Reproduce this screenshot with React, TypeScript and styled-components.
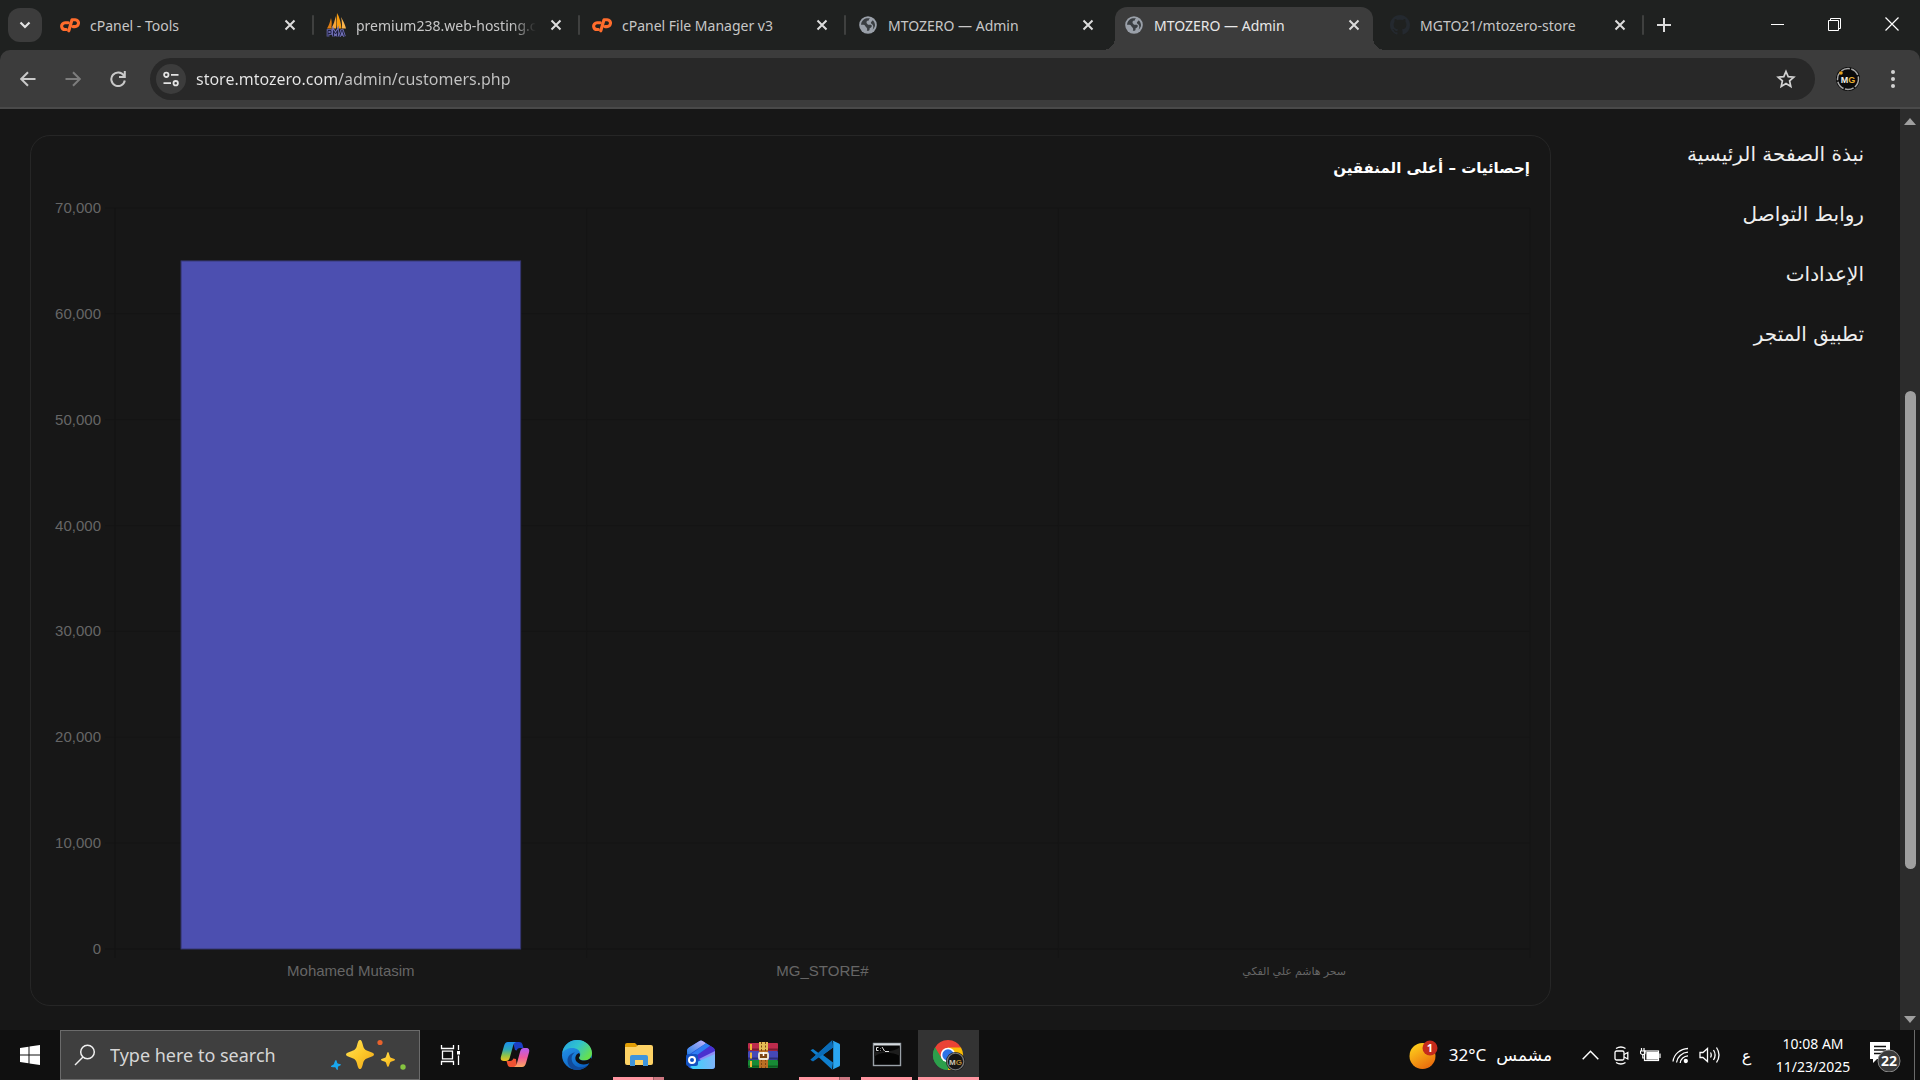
import React from "react";
import styled, { createGlobalStyle, css } from "styled-components";

const ui = `"Noto Sans", "Open Sans", "DejaVu Sans", sans-serif`;
const arabic = `"DejaVu Sans", "Noto Sans", sans-serif`;

const GlobalStyle = createGlobalStyle`
  *, *::before, *::after { box-sizing: border-box; }
  body { margin: 0; background: #171717; color: #fff; font-family: ${ui}; overflow: hidden; }
  button { border: 0; padding: 0; margin: 0; background: none; color: inherit; font: inherit; }
  input { border: 0; padding: 0; margin: 0; background: none; font: inherit; outline: none; }
  svg { display: block; flex: none; }
`;

const Screen = styled.div`
  display: flex;
  flex-direction: column;
  height: 100vh;
`;

/* ---------- tab strip ---------- */

const TabStrip = styled.header`
  display: flex;
  align-items: center;
  flex: none;
  height: 50px;
  padding-left: 8px;
  background: #1f2120;
`;

const TabSearch = styled.button`
  display: grid;
  place-items: center;
  width: 34px;
  height: 34px;
  margin-right: 6px;
  border-radius: 12px;
  background: #3c3c3c;
`;

const Tabs = styled.div`
  display: flex;
  align-self: stretch;
  flex: 0 1 1596px;
  min-width: 0;
`;

const TabSlot = styled.div<{ $line: boolean }>`
  display: flex;
  align-items: center;
  flex: 1 1 0;
  min-width: 0;
  &::after {
    content: "";
    flex: none;
    width: 2px;
    height: 20px;
    border-radius: 1px;
    background: ${(p) => (p.$line ? "#3f403f" : "transparent")};
  }
`;

const TabBody = styled.div<{ $active: boolean }>`
  display: flex;
  align-items: center;
  gap: 10px;
  flex: 1;
  min-width: 0;
  height: 43px;
  margin: 7px 3px 0;
  padding: 0 9px 7px 9px;
  position: relative;
  color: ${(p) => (p.$active ? "#e8e8e8" : "#c7c7c7")};
  ${(p) =>
    p.$active &&
    css`
      background: #3c3c3c;
      border-radius: 12px 12px 0 0;
      &::before,
      &::after {
        content: "";
        position: absolute;
        bottom: 0;
        width: 12px;
        height: 12px;
      }
      &::before {
        right: 100%;
        background: radial-gradient(circle at 0 0, transparent 12px, #3c3c3c 12px);
      }
      &::after {
        left: 100%;
        background: radial-gradient(circle at 100% 0, transparent 12px, #3c3c3c 12px);
      }
    `}
`;

const TabTitle = styled.span<{ $fade?: boolean }>`
  flex: 1;
  min-width: 0;
  overflow: hidden;
  white-space: nowrap;
  padding-top: 2px;
  font-size: 14px;
  line-height: 20px;
  ${(p) => p.$fade && "mask-image: linear-gradient(to right, #000 calc(100% - 24px), transparent);"}
`;

const TabClose = styled.button`
  display: grid;
  place-items: center;
  width: 20px;
  height: 20px;
`;

const NewTab = styled.button`
  display: grid;
  place-items: center;
  width: 36px;
  height: 36px;
  margin-left: 2px;
`;

const WindowButtons = styled.div`
  display: flex;
  align-self: stretch;
  margin-left: auto;
`;

const WindowButton = styled.button`
  display: grid;
  place-items: center;
  width: 57px;
  height: 48px;
`;

/* ---------- toolbar ---------- */

const ToolbarBack = styled.div`
  flex: none;
  background: #1f2120;
`;

const Toolbar = styled.nav`
  display: flex;
  align-items: center;
  height: 59px;
  padding: 0 5px;
  border-bottom: 2px solid #4a4a4a;
  border-radius: 10px 10px 0 0;
  background: #3c3c3c;
`;

const ToolButton = styled.button`
  display: grid;
  place-items: center;
  width: 45px;
  height: 40px;
`;

const AddressBar = styled.div`
  display: flex;
  align-items: center;
  flex: 1;
  height: 42px;
  margin: 0 10px;
  padding: 0 19px 0 6px;
  border-radius: 21px;
  background: #282828;
`;

const SiteInfo = styled.button`
  display: grid;
  place-items: center;
  width: 30px;
  height: 30px;
  border-radius: 50%;
  background: #3c3c3c;
`;

const Address = styled.input`
  flex: 1;
  min-width: 0;
  margin-left: 10px;
  height: 30px;
  font-size: 16px;
  color: #e6e6e6;
  background: linear-gradient(to right, #e8e8e8 143px, #c4c4c4 143px);
  background-clip: text;
  -webkit-background-clip: text;
  -webkit-text-fill-color: transparent;
`;

/* ---------- page ---------- */

const Viewport = styled.div`
  display: flex;
  flex: 1;
  min-height: 0;
`;

const Page = styled.div`
  display: flex;
  flex: 1;
  min-width: 0;
  font-family: ${arabic};
`;

const SideNav = styled.nav`
  display: flex;
  flex-direction: column;
  flex: none;
  width: 349px;
  padding: 15px 36px 0;
`;

const SideLink = styled.a`
  font-size: 20px;
  line-height: 60px;
  color: #eee;
  text-decoration: none;
`;

const Card = styled.section`
  display: flex;
  flex-direction: column;
  flex: 1;
  min-width: 0;
  margin: 26px 0 24px;
  margin-inline-end: 30px;
  padding: 20px;
  border: 1px solid #262626;
  border-radius: 20px;
`;

const CardTitle = styled.h2`
  margin: 0 0 28px;
  font-size: 15px;
  line-height: 24px;
  font-weight: 700;
  color: #fff;
`;

const Chart = styled.figure`
  display: grid;
  grid-template-columns: 64px 1fr;
  grid-template-rows: 1fr 36px;
  flex: 1;
  min-height: 0;
  margin: 0;
  direction: ltr;
  font-family: "Liberation Sans", "DejaVu Sans", sans-serif;
  font-size: 15px;
  line-height: 18px;
  color: #666;
`;

const YAxis = styled.div`
  display: flex;
  flex-direction: column;
  justify-content: space-between;
  padding-right: 14px;
`;

const YLabel = styled.span`
  display: flex;
  align-items: center;
  justify-content: flex-end;
  height: 0;
`;

const Plot = styled.svg`
  width: 100%;
  height: 100%;
  overflow: visible;
`;

const XAxis = styled.div`
  display: grid;
  grid-template-columns: repeat(3, 1fr);
  grid-column: 2;
  align-items: center;
  padding-top: 8px;
  text-align: center;
`;

const XLabel = styled.span<{ $small?: boolean }>`
  font-size: ${(p) => (p.$small ? 11 : 15)}px;
`;

const ScrollTrack = styled.div`
  display: flex;
  flex-direction: column;
  align-items: center;
  flex: none;
  width: 20px;
  padding: 9px 0 7px;
  background: #2c2c2c;
`;

const ScrollSpace = styled.div<{ $grow: number }>`
  flex: ${(p) => p.$grow} 1 0;
`;

const ScrollThumb = styled.div`
  flex: 478 1 0;
  width: 11px;
  border-radius: 6px;
  background: #9f9f9f;
`;

/* ---------- taskbar ---------- */

const Taskbar = styled.footer`
  display: flex;
  align-items: stretch;
  flex: none;
  height: 50px;
  background: #101010;
`;

const StartButton = styled.button`
  display: grid;
  place-items: center;
  width: 60px;
`;

const SearchBox = styled.label`
  display: flex;
  align-items: center;
  width: 360px;
  padding: 0 10px 0 13px;
  border: 1px solid #6b6b6b;
  background: #3f3f3f;
`;

const SearchInput = styled.input`
  flex: 1;
  min-width: 0;
  margin-left: 14px;
  font-size: 18px;
  color: #ddd;
  &::placeholder { color: #d6d6d6; opacity: 1; }
`;

const TaskButton = styled.button`
  display: grid;
  place-items: center;
  width: 60px;
`;

const Apps = styled.div`
  display: flex;
  gap: 1px;
  margin-left: 4px;
`;

const AppButton = styled.button<{ $state?: "open" | "stacked" | "active" }>`
  display: flex;
  flex-direction: column;
  align-items: center;
  justify-content: space-between;
  width: 61px;
  padding-top: 9px;
  background: ${(p) => (p.$state === "active" ? "#333" : "none")};
  &::after {
    content: "";
    width: ${(p) => (p.$state === "active" ? "61px" : "51px")};
    height: 3px;
    background: ${(p) =>
      !p.$state
        ? "none"
        : p.$state === "stacked"
        ? "linear-gradient(to right, #ff95a0 40px, #9a5f66 40px 41px, #cc7781 41px)"
        : "#ff95a0"};
  }
`;

const Tray = styled.div`
  display: flex;
  align-items: center;
  margin-left: auto;
`;

const Weather = styled.button`
  display: flex;
  align-items: center;
  gap: 10px;
  margin-right: 22px;
  font-size: 17px;
  line-height: 24px;
`;

const WeatherWord = styled.span`
  font-family: ${arabic};
  font-size: 17px;
`;

const TrayButton = styled.button<{ $w: number }>`
  display: grid;
  place-items: center;
  width: ${(p) => p.$w}px;
  height: 40px;
  font-family: ${arabic};
  font-size: 16px;
`;

const Clock = styled.button`
  width: 88px;
  margin-right: 3px;
  font-size: 14px;
  line-height: 23px;
  text-align: center;
  white-space: nowrap;
`;

const Notices = styled.button`
  display: grid;
  place-items: center;
  width: 55px;
  height: 50px;
  border-right: 1px solid #6a6a6a;
  margin-right: 5px;
  padding-right: 2px;
`;

/* ---------- drawings ---------- */

const Cross = ({ color = "#dcdcdc" }: { color?: string }) => (
  <svg width="12" height="12" viewBox="0 0 12 12" fill="none" stroke={color} strokeWidth="2">
    <path d="M1.5 1.5l9 9M10.5 1.5l-9 9" />
  </svg>
);

const CpanelIcon = () => (
  <svg width="20" height="20" viewBox="0 0 20 20" fill="none" stroke="#ff6c2c" strokeWidth="3.1" strokeLinecap="round" strokeLinejoin="round">
    <path d="M8.3 7.7H5.5a3.500 3.500 0 0 0-3.700 4.400c.3 1.600 1.600 2.400 3.200 2.400H6.300" />
    <path d="M8.800 15.800L12 4.700h3a3.300 3.300 0 0 1 3.300 4.300c-.400 1.700-1.700 2.600-3.300 2.600h-2" />
  </svg>
);

const PmaIcon = () => (
  <svg width="20" height="24" viewBox="0 0 20 24">
    <path d="M5 5C4 9 3 12 1 15.500h4c1-3 1-7 0-10.500z" fill="#dd7c12" />
    <path d="M9.500 3C9 8 7.500 12 5 15.500h5c.500-4 .300-8-.500-12.500z" fill="#f7a63a" />
    <path d="M11 0c-.500 6-.500 11 0 15.500h4.500C15 10 13.500 4 11 0z" fill="#f89c0e" />
    <path d="M15 4c1 4 1 8 1 11.500h4c-1-4-3-8-5-11.500z" fill="#fbb44c" />
    <path d="M2 23.500v-6h3v3H2M7.500 23.500v-6l2 3.500 2-3.500v6M13.500 23.500l2-6h1l2 6M14.500 21.500h3" fill="none" stroke="#6f6fb4" strokeWidth="2.600" />
    <path d="M2 23.500v-6h3v3H2M7.500 23.500v-6l2 3.500 2-3.500v6M13.500 23.500l2-6h1l2 6" fill="none" stroke="#1f1f40" strokeWidth="1" />
  </svg>
);

const GlobeIcon = () => (
  <svg width="20" height="20" viewBox="0 0 20 20">
    <circle cx="10" cy="10" r="8.800" fill="#9aa0a9" />
    <path d="M3 9.800C3 7 5 4.500 7.500 3.600c2-.600 3.700-.300 4.500 0-1 .500-1.400 1.400-1 2-1.600 0-2.500.500-2.500 1.800 0 1.200 1.400 1.200 1.400 2.400H13c1 .500 1.200 1.800 0 2.600l-1.500 1v1.500c-.700.900-2.200.900-2.700.800.700-1.400.400-2.700-.600-3.500C7.200 11.300 7 10 5.500 9.800zM14.500 5.200c1.800 1.300 2.700 3.200 2.500 5.800-.500 1.500-1.300 2.700-2.400 3.700.900-2.200 1-3.600-.200-5.100-.900-.900-1.600-1-1.500-2.100.100-1.100 1.400-1 1.600-2.300z" fill="#3a3e42" />
  </svg>
);

const GithubIcon = () => (
  <svg width="20" height="20" viewBox="0 0 16 16">
    <path fill="#24292f" d="M8 0C3.580 0 0 3.580 0 8c0 3.540 2.290 6.530 5.470 7.590.400.070.550-.170.550-.380 0-.190-.010-.820-.010-1.490-2.010.370-2.530-.490-2.690-.940-.090-.230-.480-.940-.820-1.130-.280-.150-.680-.520-.010-.530.630-.010 1.080.580 1.230.820.720 1.210 1.870.870 2.330.660.070-.520.280-.870.510-1.070-1.780-.200-3.640-.890-3.640-3.950 0-.870.310-1.590.820-2.150-.080-.200-.360-1.020.080-2.120 0 0 .670-.210 2.200.820.640-.180 1.320-.270 2-.270s1.360.090 2 .270c1.530-1.040 2.200-.820 2.200-.820.440 1.100.160 1.920.080 2.120.510.560.820 1.270.820 2.150 0 3.070-1.870 3.750-3.650 3.950.290.250.540.730.540 1.480 0 1.070-.010 1.930-.010 2.200 0 .210.150.460.550.380A8.010 8.010 0 0 0 16 8c0-4.420-3.580-8-8-8z" />
  </svg>
);

const line = { fill: "none", stroke: "#fff" } as const;

const Avatar = () => (
  <svg width="26" height="26" viewBox="0 0 26 26">
    <circle cx="13" cy="13" r="12" fill="#0b0b0b" />
    <circle cx="13" cy="13" r="10.500" fill="none" stroke="#a5a5a5" strokeWidth="1.500" strokeDasharray="9 1.500" />
    <circle cx="6" cy="7" r="1.800" fill="#e8a11c" />
    <text x="13" y="16.500" textAnchor="middle" fontSize="9" fontWeight="700" fontFamily="Liberation Sans, sans-serif" fill="#f1efe8">
      M<tspan fill="#e9b233">G</tspan>
    </text>
  </svg>
);

const Sparkles = () => (
  <svg width="78" height="48" viewBox="0 0 78 48">
    <defs>
      <linearGradient id="gold" x1="0" y1="0" x2="1" y2="1">
        <stop offset="0" stopColor="#ffe45c" />
        <stop offset=".5" stopColor="#fdc92a" />
        <stop offset="1" stopColor="#eda31b" />
      </linearGradient>
    </defs>
    <path d="M29 9c1.500 0 2 1.500 3 5.500 1 3.500 2 4.300 5 5.500 4 1.500 6 2 6 3.500s-2 2-6 3.500c-3 1.200-4 2-5 5.500-1 4-1.500 5.500-3 5.500s-2-1.500-3-5.500c-1-3.500-2-4.300-5-5.500-4-1.500-6-2-6-3.500s2-2 6-3.500c3-1.200 4-2 5-5.500 1-4 1.500-5.500 3-5.500z" fill="url(#gold)" />
    <path d="M57 21c1 0 1.500 4.500 2.500 5.500s4.500 1.200 4.500 2.200-3.500 1.300-4.500 2.300S58 36 57 36s-1.500-4-2.500-5S50 29.700 50 28.700s3.500-1.200 4.500-2.200S56 21 57 21z" fill="url(#gold)" />
    <path d="M5 29c.800 0 .800 2.800 1.700 3.500.8.700 3.300.300 3.300 1.200s-2.600 1.200-3 2c-.400.900.300 3.300-.700 3.300s-1.300-2.300-2.200-2.700C3.200 36 0 36.500 0 35.500s2.300-1.300 2.800-2.200C3.300 32.500 4 29 5 29z" fill="#19a7ee" />
    <circle cx="49" cy="11.500" r="2.600" fill="#e8622c" />
    <circle cx="72" cy="36" r="2.700" fill="#86c440" />
  </svg>
);

const CopilotIcon = () => (
  <svg width="32" height="32" viewBox="0 0 32 32">
    <defs>
      <linearGradient id="cpA" x1="0" y1="0" x2="0" y2="1">
        <stop offset="0" stopColor="#1a8ff0" />
        <stop offset=".4" stopColor="#2fa9b6" />
        <stop offset=".7" stopColor="#8cc24a" />
        <stop offset="1" stopColor="#f2c21c" />
      </linearGradient>
      <linearGradient id="cpB" x1="0" y1="0" x2="0" y2="1">
        <stop offset="0" stopColor="#b45cf4" />
        <stop offset=".5" stopColor="#ee5a9c" />
        <stop offset="1" stopColor="#fca860" />
      </linearGradient>
    </defs>
    <path d="M14 3h6c2 0 3 .800 3.500 2.500L24.500 9H21c-2 0-2.800 1-3.300 2.500L16 11z" fill="#1b3fc4" />
    <path d="M18 28h-6c-2 0-3-.800-3.500-2.500L7.500 22H11c2 0 2.800-1 3.300-2.500L17 20z" fill="#ef5232" />
    <path d="M9 3h8c-1.800.700-2.500 2-3 4l-3.300 12c-.600 2-1.700 3-3.700 3H5c-3 0-3.800-1.800-3-4.500L5 7c.800-2.500 1.800-4 4-4z" fill="url(#cpA)" />
    <path d="M23 28h-8c1.800-.700 2.500-2 3-4l3.300-12c.600-2 1.700-3 3.700-3h2c3 0 3.800 1.800 3 4.500L27 24c-.800 2.500-1.800 4-4 4z" fill="url(#cpB)" />
  </svg>
);

const EdgeIcon = () => (
  <svg width="32" height="32" viewBox="0 0 32 32">
    <defs>
      <linearGradient id="edgeTop" x1="0" y1="0" x2="1" y2=".6">
        <stop offset="0" stopColor="#249fe0" />
        <stop offset=".5" stopColor="#30c3cf" />
        <stop offset="1" stopColor="#66e04e" />
      </linearGradient>
      <linearGradient id="edgeLow" x1="0" y1="0" x2=".5" y2="1">
        <stop offset="0" stopColor="#2b9df0" />
        <stop offset="1" stopColor="#0b63c4" />
      </linearGradient>
    </defs>
    <circle cx="16" cy="16" r="15" fill="url(#edgeLow)" />
    <path d="M1.300 14C2.500 6 9 1 16 1c9 0 15 6.500 15 13 0 5-3.500 7.500-7.500 7.500-4 0-5.500-1.300-5.500-2.500 0-.800 1.300-1.500 1.300-3.800C19.300 11.500 16 9 11 9c-4 0-8 2-9.700 5z" fill="url(#edgeTop)" />
    <path d="M14 13.500c-4 2-4.500 8-1 12 3 3.500 9 4 14.500 0C24.500 29 20.500 31 16 31c-6 0-9.500-5-9.500-9.500 0-4 3-7.500 7.500-8z" fill="#114b9b" />
    <path d="M18 14c1.300 1.200 1.200 2.500.500 3.500-.600.800-.700 1-.5 1.700.500 1.500 2.500 2.300 5.500 2.300 2.500 0 5-1 6.300-3l2.200 3L28.500 25c-.3-.3-1-.5-1.500-.3-4 1.500-9 .8-11.500-2.200-2-2.500-1.500-7 2.500-8.500z" fill="#101010" />
  </svg>
);

const ExplorerIcon = () => (
  <svg width="32" height="32" viewBox="0 0 32 32">
    <path d="M2 7V6a2 2 0 0 1 2-2h8l3 3v3H2z" fill="#e29e05" />
    <path d="M15 6h13a2 2 0 0 1 2 2v16a2 2 0 0 1-2 2H4a2 2 0 0 1-2-2V8h11z" fill="#fdd265" />
    <path d="M7 27V18a2 2 0 0 1 2-2h14a2 2 0 0 1 2 2v9h-5v-6h-8v6z" fill="#3f95dc" />
  </svg>
);

const MailIcon = () => (
  <svg width="32" height="32" viewBox="0 0 32 32">
    <defs>
      <linearGradient id="mailRoof" x1="0" y1="1" x2="1" y2="0">
        <stop offset="0" stopColor="#1f7fe8" />
        <stop offset="1" stopColor="#c9b4fb" />
      </linearGradient>
      <linearGradient id="mailBody" x1="0" y1="0" x2="1" y2="0">
        <stop offset="0" stopColor="#35d3fb" />
        <stop offset="1" stopColor="#7fb4fa" />
      </linearGradient>
    </defs>
    <path d="M14.500 2a3 3 0 0 1 3 0L28 8.500a4 4 0 0 1 2 3.500v15a3 3 0 0 1-3 3H8a6 6 0 0 1-6-6V12a4 4 0 0 1 2-3.500z" fill="#2355d8" />
    <path d="M14.500 2a3 3 0 0 1 3 0L21 4.200 2.500 16.500 2 12a4 4 0 0 1 2-3.500z" fill="url(#mailRoof)" />
    <path d="M25 6.700L28 8.500a4 4 0 0 1 2 3.500l-15 9-5-3.500z" fill="#4a30cf" />
    <path d="M21 4.200l4 2.500L12 16H5z" fill="#2f7df4" />
    <path d="M30 12v4L17 22l-3-2z" fill="#8f8df5" />
    <path d="M30 15v12a3 3 0 0 1-3 3H8l-3-2 9-6z" fill="url(#mailBody)" />
    <rect x="1" y="15" width="12" height="12" rx="2.500" fill="#1252c2" />
    <circle cx="7" cy="21" r="3" fill="none" stroke="#fff" strokeWidth="2" />
  </svg>
);

const RarIcon = () => (
  <svg width="32" height="32" viewBox="0 0 32 32">
    <rect x="1" y="4" width="30" height="8" rx="1" fill="#bd2b4c" />
    <rect x="1" y="12" width="30" height="9" rx="1" fill="#4548b8" />
    <rect x="1" y="21" width="30" height="8" rx="1" fill="#178a35" />
    <path d="M1 10.500h30M1 19.500h30M1 27.500h30" stroke="#000" strokeOpacity=".35" strokeWidth="2" />
    <path d="M4 5v6M4 13.500v6M4 22v6" stroke="#f0b63a" strokeWidth="2" />
    <rect x="12" y="3" width="9" height="26" fill="#b96f24" />
    <rect x="12" y="3" width="9" height="8" fill="#e3bd55" />
    <path d="M14.500 3v26M18.500 3v26" stroke="#7c4512" strokeDasharray="2 1.500" />
    <rect x="12" y="14" width="9" height="6" rx="1" fill="#7c4512" stroke="#f1ead8" strokeWidth="1.800" />
    <path d="M16.500 13v4" stroke="#fff" strokeWidth="1.500" />
  </svg>
);

const CodeIcon = () => (
  <svg width="32" height="32" viewBox="0 0 32 32">
    <path d="M23 1.500L9.500 14 4 10 1.500 11.200 7 16l-5.500 4.800L4 22l5.500-4L23 30.500 24 23.500 14 16l10-7.500z" fill="#0f7fce" />
    <path d="M1.500 20.800l2.500 1.700L24 8.500 23 1.500z" fill="#0a6cb8" />
    <path d="M23 1.300L30 4.500c.600.300 1 .800 1 1.500v20c0 .700-.400 1.200-1 1.500l-7 3.200c1-.600 1.200-1.400 1.200-2.200V3.500c0-.900-.300-1.700-1.200-2.200z" fill="#2aa5f0" />
  </svg>
);

const TerminalIcon = () => (
  <svg width="32" height="32" viewBox="0 0 32 32">
    <rect x="2.500" y="4.500" width="27" height="22" fill="#050505" stroke="#9aa1a8" strokeWidth="1.400" />
    <path d="M3 5.500h26" stroke="#d5dade" strokeWidth="2" />
    <path d="M3 13C9 12 22 14 29 8v9C20 12 8 13 3 18z" fill="#1d1d1d" />
    <path d="M7.500 8.500H5.500v3h2M9.500 9v.5M9.500 11v.5M11 8l2.500 4M14 12.500h4" fill="none" stroke="#e5e5e5" />
  </svg>
);

const ChromeIcon = () => (
  <svg width="34" height="32" viewBox="0 0 34 32">
    <path d="M16 16L3 8.500A15 15 0 0 1 29 8.500z" fill="#ea4335" />
    <path d="M16 16V8.500h13A15 15 0 0 1 16 31z" fill="#fbbc05" />
    <path d="M16 16l6 4-6.500 11A15 15 0 0 1 3 8.500z" fill="#2c9f4b" />
    <path d="M3 8.500l7 11.500 6-11.500z" fill="#ea4335" />
    <path d="M3 8.500L9.500 20l3 2.500L16 31A15 15 0 0 1 3 8.500z" fill="#2c9f4b" />
    <circle cx="16" cy="16" r="7.300" fill="#fff" />
    <circle cx="16" cy="16" r="5.700" fill="#2b72e6" />
    <circle cx="23.500" cy="22.500" r="9.500" fill="#161616" />
    <circle cx="23.500" cy="22.500" r="8.300" fill="none" stroke="#777" strokeWidth="1.300" />
    <text x="23.500" y="25.500" textAnchor="middle" fontSize="8" fontWeight="700" fontFamily="Liberation Sans, sans-serif" fill="#c9c4b5">
      M<tspan fill="#b78b33">G</tspan>
    </text>
  </svg>
);

const WeatherIcon = () => (
  <svg width="30" height="32" viewBox="0 0 30 32">
    <defs>
      <linearGradient id="sun" x1=".2" y1="0" x2=".8" y2="1">
        <stop offset="0" stopColor="#ffd21c" />
        <stop offset="1" stopColor="#e8650c" />
      </linearGradient>
    </defs>
    <circle cx="13.500" cy="17" r="13" fill="url(#sun)" />
    <circle cx="21" cy="9" r="7.500" fill="#c42b1c" />
    <text x="21" y="13" textAnchor="middle" fontSize="11" fontWeight="700" fontFamily="Noto Sans, sans-serif" fill="#fff">
      1
    </text>
  </svg>
);

/* ---------- data ---------- */

const tabs = [
  { title: "cPanel - Tools", icon: <CpanelIcon /> },
  { title: "premium238.web-hosting.c", icon: <PmaIcon />, fade: true },
  { title: "cPanel File Manager v3", icon: <CpanelIcon /> },
  { title: "MTOZERO — Admin", icon: <GlobeIcon /> },
  { title: "MTOZERO — Admin", icon: <GlobeIcon />, active: true },
  { title: "MGTO21/mtozero-store", icon: <GithubIcon /> },
];

const links = ["نبذة الصفحة الرئيسية", "روابط التواصل", "الإعدادات", "تطبيق المتجر"];

const maxSpend = 70000;
const ticks = [70000, 60000, 50000, 40000, 30000, 20000, 10000, 0];
const spenders = [
  { name: "Mohamed Mutasim", value: 65000 },
  { name: "MG_STORE#", value: 0 },
  { name: "سحر هاشم علي الفكي", value: 0, small: true },
];

const apps: { name: string; icon: React.ReactNode; state?: "open" | "stacked" | "active" }[] = [
  { name: "Copilot", icon: <CopilotIcon /> },
  { name: "Edge", icon: <EdgeIcon /> },
  { name: "File Explorer", icon: <ExplorerIcon />, state: "stacked" },
  { name: "Outlook", icon: <MailIcon /> },
  { name: "WinRAR", icon: <RarIcon /> },
  { name: "Visual Studio Code", icon: <CodeIcon />, state: "stacked" },
  { name: "Command Prompt", icon: <TerminalIcon />, state: "open" },
  { name: "Chrome", icon: <ChromeIcon />, state: "active" },
];

const SpendChart = () => {
  const slot = 100 / spenders.length;
  const barWidth = slot * 0.72;
  return (
    <Chart>
      <YAxis>
        {ticks.map((t) => (
          <YLabel key={t}>{t.toLocaleString("en-US")}</YLabel>
        ))}
      </YAxis>
      <Plot>
        {ticks.map((t, i) => (
          <line
            key={t}
            x1="-10"
            x2="100%"
            y1={`${(i * 100) / 7}%`}
            y2={`${(i * 100) / 7}%`}
            stroke={t === 0 ? "#121212" : "#151515"}
          />
        ))}
        {[0, 1, 2, 3].map((i) => (
          <g key={i} stroke={i === 0 ? "#131313" : "#151515"}>
            <line x1={`${i * slot}%`} x2={`${i * slot}%`} y1="0" y2="100%" />
            <svg x={`${i * slot}%`} y="100%" overflow="visible">
              <line x1="0" x2="0" y1="0" y2="9" />
            </svg>
          </g>
        ))}
        {spenders.map(
          (s, i) =>
            s.value > 0 && (
              <rect
                key={s.name}
                x={`${i * slot + (slot - barWidth) / 2}%`}
                y={`${100 - (s.value / maxSpend) * 100}%`}
                width={`${barWidth}%`}
                height={`${(s.value / maxSpend) * 100}%`}
                fill="#4c4fb0"
                stroke="#34366f"
              />
            )
        )}
      </Plot>
      <XAxis>
        {spenders.map((s) => (
          <XLabel key={s.name} $small={s.small}>
            {s.name}
          </XLabel>
        ))}
      </XAxis>
    </Chart>
  );
};

export default function App() {
  return (
    <Screen>
      <GlobalStyle />
      <TabStrip>
        <TabSearch aria-label="Search tabs">
          <svg width="14" height="14" viewBox="0 0 14 14" fill="none" stroke="#e3e3e3" strokeWidth="2.200">
            <path d="M2.500 4.500L7 9l4.500-4.500" />
          </svg>
        </TabSearch>
        <Tabs>
          {tabs.map((t, i) => (
            <TabSlot key={i} $line={i !== 3 && i !== 4}>
              <TabBody $active={!!t.active}>
                {t.icon}
                <TabTitle $fade={t.fade}>{t.title}</TabTitle>
                <TabClose aria-label="Close tab">
                  <Cross />
                </TabClose>
              </TabBody>
            </TabSlot>
          ))}
        </Tabs>
        <NewTab aria-label="New tab">
          <svg width="14" height="14" viewBox="0 0 14 14" stroke="#dcdcdc" strokeWidth="2">
            <path d="M7 0v14M0 7h14" />
          </svg>
        </NewTab>
        <WindowButtons>
          <WindowButton aria-label="Minimize">
            <svg width="13" height="13" viewBox="0 0 13 13" {...line}>
              <path d="M0 6.500h13" />
            </svg>
          </WindowButton>
          <WindowButton aria-label="Restore">
            <svg width="13" height="13" viewBox="0 0 13 13" {...line}>
              <path d="M.500 2.500h10v10h-10zM2.500 2.500v-2h10v10h-2" />
            </svg>
          </WindowButton>
          <WindowButton aria-label="Close">
            <svg width="14" height="14" viewBox="0 0 14 14" {...line} strokeWidth="1.200">
              <path d="M.500.500l13 13M13.500.500l-13 13" />
            </svg>
          </WindowButton>
        </WindowButtons>
      </TabStrip>

      <ToolbarBack>
        <Toolbar>
          <ToolButton aria-label="Back">
            <svg width="16" height="16" viewBox="0 0 16 16" fill="none" stroke="#c9c9c9" strokeWidth="2">
              <path d="M15.500 8H1.500M8 1.200L1.200 8 8 14.800" />
            </svg>
          </ToolButton>
          <ToolButton aria-label="Forward">
            <svg width="16" height="16" viewBox="0 0 16 16" fill="none" stroke="#7d7d7d" strokeWidth="2">
              <path d="M.500 8h14M8 1.200L14.800 8 8 14.800" />
            </svg>
          </ToolButton>
          <ToolButton aria-label="Reload">
            <svg width="16" height="16" viewBox="0 0 16 16" fill="none" stroke="#c9c9c9" strokeWidth="2">
              <path d="M13.800 4.500A6.800 6.800 0 1 0 14.800 9.500M14.800 0v6H9" />
            </svg>
          </ToolButton>
          <AddressBar>
            <SiteInfo aria-label="View site information">
              <svg width="16" height="16" viewBox="0 0 16 16" fill="none" stroke="#e3e3e3" strokeWidth="1.800">
                <circle cx="3.300" cy="3.800" r="2.200" />
                <path d="M8 3.800h7.500M.500 12.200H8" />
                <circle cx="12.700" cy="12.200" r="2.200" />
              </svg>
            </SiteInfo>
            <Address aria-label="Address" defaultValue="store.mtozero.com/admin/customers.php" />
            <svg width="20" height="20" viewBox="0 0 20 20" fill="none" stroke="#d2d2d2" strokeWidth="1.700">
              <path d="M10 2.500l2.200 5.200 5.600.500-4.200 3.700 1.200 5.500L10 14.500l-4.800 2.900 1.200-5.500L2.200 8.200l5.600-.5z" />
            </svg>
          </AddressBar>
          <ToolButton aria-label="Profile">
            <Avatar />
          </ToolButton>
          <ToolButton aria-label="Menu">
            <svg width="4" height="18" viewBox="0 0 4 18" fill="#d2d2d2">
              <circle cx="2" cy="2" r="2" />
              <circle cx="2" cy="9" r="2" />
              <circle cx="2" cy="16" r="2" />
            </svg>
          </ToolButton>
        </Toolbar>
      </ToolbarBack>

      <Viewport>
        <Page dir="rtl">
          <SideNav>
            {links.map((l) => (
              <SideLink key={l} href="#">
                {l}
              </SideLink>
            ))}
          </SideNav>
          <Card>
            <CardTitle>إحصائيات – أعلى المنفقين</CardTitle>
            <SpendChart />
          </Card>
        </Page>
        <ScrollTrack>
          <svg width="12" height="7" viewBox="0 0 12 7" fill="#9f9f9f">
            <path d="M6 0l6 7H0z" />
          </svg>
          <ScrollSpace $grow={266} />
          <ScrollThumb />
          <ScrollSpace $grow={147} />
          <svg width="12" height="7" viewBox="0 0 12 7" fill="#9f9f9f">
            <path d="M0 0h12L6 7z" />
          </svg>
        </ScrollTrack>
      </Viewport>

      <Taskbar>
        <StartButton aria-label="Start">
          <svg width="20" height="20" viewBox="0 0 20 20" fill="#fff">
            <path d="M0 3l8.500-1.200v7.700H0zM9.500 1.600L20 0v9.500H9.500zM0 10.500h8.500v7.700L0 17zM9.500 10.500H20V20L9.500 18.400z" />
          </svg>
        </StartButton>
        <SearchBox>
          <svg width="22" height="22" viewBox="0 0 22 22" fill="none" stroke="#f0f0f0" strokeWidth="1.500">
            <circle cx="13.500" cy="8" r="6.800" />
            <path d="M9 13L1 21" />
          </svg>
          <SearchInput type="text" aria-label="Search" placeholder="Type here to search" />
          <Sparkles />
        </SearchBox>
        <TaskButton aria-label="Task view">
          <svg width="20" height="20" viewBox="0 0 20 20" {...line} strokeWidth="1.300">
            <path d="M1.500 0v3.500h12V0M1.500 20v-3.500h12V20M2.500 6.200h10v7.600h-10zM18.500 0v5M18.500 10.500V20" />
            <path d="M18.500 6v3.500" strokeWidth="3" />
          </svg>
        </TaskButton>
        <Apps>
          {apps.map((a) => (
            <AppButton key={a.name} aria-label={a.name} $state={a.state}>
              {a.icon}
            </AppButton>
          ))}
        </Apps>
        <Tray>
          <Weather>
            <WeatherIcon />
            <span>32°C</span>
            <WeatherWord>مشمس</WeatherWord>
          </Weather>
          <TrayButton $w={32} aria-label="Show hidden icons">
            <svg width="17" height="10" viewBox="0 0 17 10" {...line} strokeWidth="1.500">
              <path d="M.700 9.300l7.800-8 7.800 8" />
            </svg>
          </TrayButton>
          <TrayButton $w={30} aria-label="Meet now">
            <svg width="15" height="19" viewBox="0 0 15 19" {...line} strokeWidth="1.300">
              <rect x="1" y="5" width="9" height="9" rx="1.500" />
              <path d="M10 8.500l3.800-2v6.500L10 11M2 2.500q5-3 9.500 0M2 16.500q5 3 9.500 0" />
            </svg>
          </TrayButton>
          <TrayButton $w={29} aria-label="Battery">
            <svg width="21" height="15" viewBox="0 0 21 15" {...line} strokeWidth="1.200">
              <rect x="4.500" y="3" width="14" height="9.500" />
              <rect x="7" y="4.500" width="10.500" height="6.500" fill="#fff" />
              <path d="M20 5.500V10M1.500 0v3M4 0v3M.500 3h4.500v2q0 1.500-2.200 1.500T.500 5zM2.800 6.500V10H5" />
            </svg>
          </TrayButton>
          <TrayButton $w={30} aria-label="Network">
            <svg width="17" height="17" viewBox="0 0 17 17" {...line} strokeWidth="1.300">
              <path d="M1 14.500C2 7 8 2 16 1.500" />
              <path d="M4.500 15.500C5 10 10 5.500 16 5.200M8.200 16c.300-3.800 3.800-7 7.800-7.200" />
              <circle cx="13.800" cy="14" r="1.500" fill="#fff" />
            </svg>
          </TrayButton>
          <TrayButton $w={29} aria-label="Volume">
            <svg width="22" height="18" viewBox="0 0 22 18" {...line} strokeWidth="1.300">
              <path d="M1 6.500h3L8.500 2.500v13L4 11.500H1zM11.500 6.500q1.500 2.500 0 5M14.500 4q3.200 5 0 10M17.500 1.500q5 7.500 0 15" />
            </svg>
          </TrayButton>
          <TrayButton $w={45}>ع</TrayButton>
          <Clock>
            10:08 AM
            <br />
            11/23/2025
          </Clock>
          <Notices aria-label="Notifications, 22 new">
            <svg width="34" height="34" viewBox="0 0 34 34">
              <path d="M1 4h20v17H8l-4 4v-4H1z" fill="#fff" />
              <path d="M5 8.500h12M5 12h12M5 15.500h8" stroke="#101010" strokeWidth="1.300" />
              <circle cx="20" cy="23" r="11" fill="#3a3a3a" stroke="#8a8a8a" />
              <text x="20" y="28" textAnchor="middle" fontSize="14" fontWeight="700" fontFamily="Noto Sans, sans-serif" fill="#fff">
                22
              </text>
            </svg>
          </Notices>
        </Tray>
      </Taskbar>
    </Screen>
  );
}
